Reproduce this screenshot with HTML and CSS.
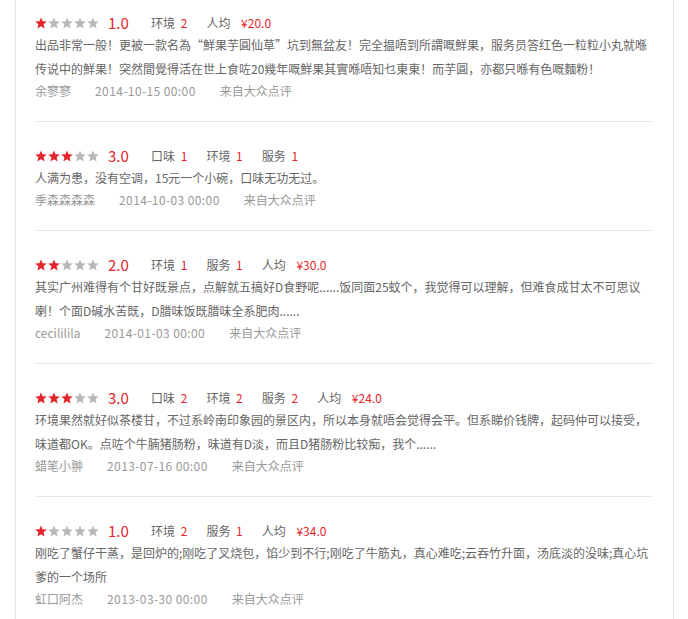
FILE: index.html
```html
<!DOCTYPE html>
<html lang="zh-CN">
<head>
    <meta charset="UTF-8">
    <title>点评列表</title>
    <link rel="stylesheet" href="styles.css">
</head>
<body>
    <svg width="0" height="0" class="defs">
        <symbol id="star" viewBox="0 0 12 12">
            <polygon points="6,0.4 7.6,4.3 11.8,4.6 8.6,7.3 9.6,11.5 6,9.2 2.4,11.5 3.4,7.3 0.2,4.6 4.4,4.3"/>
        </symbol>
    </svg>
    <div class="reviews">
        <div class="review first">
            <div class="rate">
                <span class="stars">
                    <svg class="on"><use href="#star"/></svg><svg><use href="#star"/></svg><svg><use href="#star"/></svg><svg><use href="#star"/></svg><svg><use href="#star"/></svg>
                </span>
                <span class="score">1.0</span>
                <span class="tag">环境 <em>2</em></span>
                <span class="tag">人均 <em class="price">¥20.0</em></span>
            </div>
            <p class="content">出品非常一般！更被一款名為“鮮果芋圓仙草”坑到無盆友！完全揾唔到所謂嘅鮮果，服务员答红色一粒粒小丸就喺传说中的鮮果！突然間覺得活在世上食咗20幾年嘅鮮果其實喺唔知乜東東！而芋圓，亦都只喺有色嘅麵粉！</p>
            <div class="meta"><span>余寥寥</span><span class="date">2014-10-15 00:00</span><span>来自大众点评</span></div>
        </div>

        <div class="review">
            <div class="rate">
                <span class="stars">
                    <svg class="on"><use href="#star"/></svg><svg class="on"><use href="#star"/></svg><svg class="on"><use href="#star"/></svg><svg><use href="#star"/></svg><svg><use href="#star"/></svg>
                </span>
                <span class="score">3.0</span>
                <span class="tag">口味 <em>1</em></span>
                <span class="tag">环境 <em>1</em></span>
                <span class="tag">服务 <em>1</em></span>
            </div>
            <p class="content">人满为患，没有空调，15元一个小碗，口味无功无过。</p>
            <div class="meta"><span>季森森森森</span><span class="date">2014-10-03 00:00</span><span>来自大众点评</span></div>
        </div>

        <div class="review">
            <div class="rate">
                <span class="stars">
                    <svg class="on"><use href="#star"/></svg><svg class="on"><use href="#star"/></svg><svg><use href="#star"/></svg><svg><use href="#star"/></svg><svg><use href="#star"/></svg>
                </span>
                <span class="score">2.0</span>
                <span class="tag">环境 <em>1</em></span>
                <span class="tag">服务 <em>1</em></span>
                <span class="tag">人均 <em class="price">¥30.0</em></span>
            </div>
            <p class="content">其实广州难得有个甘好既景点，点解就五搞好D食野呢......饭同面25蚊个，我觉得可以理解，但难食成甘太不可思议喇！个面D碱水苦既，D腊味饭既腊味全系肥肉......</p>
            <div class="meta"><span>cecililila</span><span class="date">2014-01-03 00:00</span><span>来自大众点评</span></div>
        </div>

        <div class="review">
            <div class="rate">
                <span class="stars">
                    <svg class="on"><use href="#star"/></svg><svg class="on"><use href="#star"/></svg><svg class="on"><use href="#star"/></svg><svg><use href="#star"/></svg><svg><use href="#star"/></svg>
                </span>
                <span class="score">3.0</span>
                <span class="tag">口味 <em>2</em></span>
                <span class="tag">环境 <em>2</em></span>
                <span class="tag">服务 <em>2</em></span>
                <span class="tag">人均 <em class="price">¥24.0</em></span>
            </div>
            <p class="content">环境果然就好似茶楼甘，不过系岭南印象园的景区内，所以本身就唔会觉得会平。但系睇价钱牌，起码仲可以接受，味道都OK。点咗个牛腩猪肠粉，味道有D淡，而且D猪肠粉比较痴，我个......</p>
            <div class="meta"><span>蜡笔小翀</span><span class="date">2013-07-16 00:00</span><span>来自大众点评</span></div>
        </div>

        <div class="review">
            <div class="rate">
                <span class="stars">
                    <svg class="on"><use href="#star"/></svg><svg><use href="#star"/></svg><svg><use href="#star"/></svg><svg><use href="#star"/></svg><svg><use href="#star"/></svg>
                </span>
                <span class="score">1.0</span>
                <span class="tag">环境 <em>2</em></span>
                <span class="tag">服务 <em>1</em></span>
                <span class="tag">人均 <em class="price">¥34.0</em></span>
            </div>
            <p class="content">刚吃了蟹仔干蒸，是回炉的;刚吃了叉烧包，馅少到不行;刚吃了牛筋丸，真心难吃;云吞竹升面，汤底淡的没味;真心坑爹的一个场所</p>
            <div class="meta"><span>虹口阿杰</span><span class="date">2013-03-30 00:00</span><span>来自大众点评</span></div>
        </div>
    </div>
</body>
</html>
```

FILE: styles.css
```css
body {
    margin: 0;
    padding: 0 14px 0 15px;
    font-family: "Noto Sans CJK SC", "Liberation Sans", sans-serif;
    font-size: 12px;
    color: #666;
    background: #fff;
}
.defs {
    position: absolute;
}
.reviews {
    border-left: 1px solid #e6e6e6;
    border-right: 1px solid #e6e6e6;
    padding: 0 20px 40px 19px;
}
.review {
    padding: 24px 0 20px;
    border-bottom: 1px solid #e8e8e8;
}
.review.first {
    padding-top: 13px;
}
.rate {
    display: flex;
    align-items: center;
    height: 20px;
}
.stars {
    display: flex;
    gap: 1px;
    width: 73px;
}
.stars svg {
    width: 12px;
    height: 12px;
    fill: #b8b8b8;
}
.stars svg.on {
    fill: #e4262c;
}
.score {
    color: #e4262c;
    font-size: 15px;
    width: 43px;
    line-height: 20px;
}
.tag {
    margin-right: 19px;
    line-height: 20px;
}
.tag em {
    font-style: normal;
    color: #e4262c;
    margin-left: 3px;
}
.tag em.price {
    margin-left: 8px;
}
.content {
    margin: 0;
    line-height: 24px;
    width: 614px;
}
.meta {
    line-height: 20px;
    color: #999;
}
.meta span {
    margin-right: 24px;
}
.meta .date {
    letter-spacing: 0.4px;
}
```
